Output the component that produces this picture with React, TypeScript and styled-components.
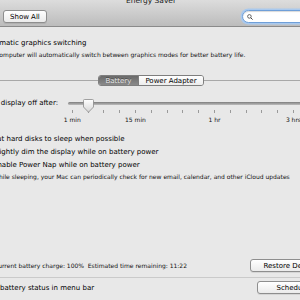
import React from 'react';
import styled, { createGlobalStyle } from 'styled-components';

const GlobalStyle = createGlobalStyle`
  html, body {
    margin: 0;
    padding: 0;
    overflow: hidden;
    background: #e8e8e8;
  }
  body {
    font-family: "DejaVu Sans", Verdana, sans-serif;
    color: #000;
  }
`;

const Window = styled.div`
  width: 388px;
  margin: -6px 0 0 -43px;
  display: flex;
  flex-direction: column;
`;

const TitleBar = styled.div`
  height: 33px;
  box-sizing: border-box;
  display: flex;
  flex-direction: column;
  background: linear-gradient(#e4e4e4, #bcbcbc);
  border-bottom: 1px solid #8a8a8a;
`;

const Title = styled.div`
  height: 14px;
  line-height: 14px;
  text-align: center;
  font-size: 7.5px;
  color: #222;
`;

const Toolbar = styled.div`
  display: flex;
  align-items: flex-start;
  gap: 7px;
  padding: 2px 10px 0 8px;
`;

const NavGroup = styled.div`
  display: flex;
  height: 13px;
  box-sizing: border-box;
  border: 1px solid #8e8e8e;
  border-radius: 3px;
  overflow: hidden;
  background: linear-gradient(#fdfdfd, #e6e6e6);
`;

const NavSeg = styled.div<{ $last?: boolean }>`
  width: 14px;
  display: flex;
  align-items: center;
  justify-content: center;
  font-size: 6px;
  color: #999;
  border-left: ${({ $last }) => ($last ? '1px solid #a0a0a0' : 'none')};
`;

const Spacer = styled.div`
  flex: 1;
`;

const PushButton = styled.div<{ $width?: number }>`
  height: 13px;
  box-sizing: border-box;
  width: ${({ $width }) => ($width ? `${$width}px` : 'auto')};
  padding: 0 6px;
  display: flex;
  align-items: center;
  justify-content: center;
  white-space: nowrap;
  font-size: 7px;
  color: #000;
  border: 1px solid #8e8e8e;
  border-radius: 3px;
  background: linear-gradient(#ffffff, #ebebeb);
  box-shadow: 0 1px 0 rgba(0, 0, 0, 0.08);
`;

const SearchField = styled.div`
  width: 93px;
  height: 13px;
  box-sizing: border-box;
  display: flex;
  align-items: center;
  padding-left: 4px;
  background: #fff;
  border: 1px solid #6f9fd8;
  border-radius: 7px;
  box-shadow: 0 0 0 1.5px #a9c9ee, inset 0 1px 1px rgba(0, 0, 0, 0.15);
`;

const Body = styled.div`
  display: flex;
  flex-direction: column;
`;

const OptionRow = styled.div<{ $indent: number; $height?: number }>`
  display: flex;
  align-items: flex-start;
  gap: 4px;
  padding-left: ${({ $indent }) => $indent}px;
  min-height: ${({ $height }) => ($height ? `${$height}px` : 'auto')};
`;

const Check = styled.div<{ $checked?: boolean; $top?: number }>`
  width: 8px;
  height: 8px;
  box-sizing: border-box;
  margin-top: ${({ $top }) => $top ?? 1}px;
  flex-shrink: 0;
  border: 1px solid #8a8a8a;
  border-radius: 2px;
  background: linear-gradient(#ffffff, #e4e4e4);
  position: relative;
  &::after {
    content: ${({ $checked }) => ($checked ? "'✓'" : "''")};
    position: absolute;
    left: 0;
    top: -3px;
    font-size: 8px;
    color: #222;
  }
`;

const OptionText = styled.div`
  display: flex;
  flex-direction: column;
`;

const Label = styled.div<{ $lh?: number }>`
  font-size: 7px;
  line-height: ${({ $lh }) => $lh ?? 10}px;
  white-space: nowrap;
  color: #000;
`;

const Note = styled.div<{ $indent?: number }>`
  font-size: 6px;
  line-height: 9px;
  white-space: nowrap;
  color: #111;
  padding-left: ${({ $indent }) => $indent ?? 0}px;
`;

const GraphicsSection = styled.div`
  padding-top: 11px;
`;

const TabView = styled.div`
  margin-top: 16px;
  height: 177px;
  display: flex;
  flex-direction: column;
`;

const TabBar = styled.div`
  display: flex;
  align-items: center;
  height: 11px;
`;

const TabLine = styled.div`
  flex: 1;
  height: 1px;
  background: #a8a8a8;
`;

const Segmented = styled.div`
  display: flex;
  height: 11px;
  box-sizing: border-box;
  border: 1px solid #7e7e7e;
  border-radius: 3px;
  overflow: hidden;
`;

const Segment = styled.div<{ $active?: boolean }>`
  padding: 0 6.5px;
  display: flex;
  align-items: center;
  font-size: 7px;
  white-space: nowrap;
  color: ${({ $active }) => ($active ? '#e6e6e6' : '#000')};
  background: ${({ $active }) =>
    $active ? 'linear-gradient(#6a6a6a, #8a8a8a)' : 'linear-gradient(#ffffff, #ececec)'};
  text-shadow: ${({ $active }) => ($active ? '0 -1px 0 rgba(0,0,0,0.4)' : 'none')};
  & + & {
    border-left: 1px solid #7e7e7e;
  }
`;

const SliderRow = styled.div`
  display: flex;
  align-items: flex-start;
  margin-top: 12px;
`;

const SliderLabel = styled.div`
  width: 101px;
  flex-shrink: 0;
  text-align: right;
  font-size: 7px;
  line-height: 10px;
  white-space: nowrap;
  margin-right: 6.4px;
`;

const Slider = styled.div`
  position: relative;
  width: 252.8px;
  margin-top: 1px;
`;

const TrackRow = styled.div`
  height: 8px;
  display: flex;
  align-items: center;
  padding: 0 3.6px;
`;

const Track = styled.div`
  flex: 1;
  height: 3px;
  border-radius: 2px;
  background: linear-gradient(#7d7d7d, #bdbdbd);
`;

const Scale = styled.div`
  display: flex;
  margin-top: 3px;
`;

const Stop = styled.div`
  width: 15.8px;
  display: flex;
  flex-direction: column;
  align-items: center;
`;

const Tick = styled.div`
  width: 1px;
  height: 3px;
  background: #9a9a9a;
`;

const StopLabel = styled.div`
  margin-top: 3px;
  font-size: 6px;
  line-height: 8px;
  white-space: nowrap;
  color: #111;
`;

const Knob = styled.svg`
  position: absolute;
  top: 0;
  width: 11px;
  height: 14px;
`;

const CheckList = styled.div`
  margin-top: 8.5px;
  display: flex;
  flex-direction: column;
`;

const StatusRow = styled.div`
  display: flex;
  align-items: center;
  justify-content: space-between;
  height: 13px;
  margin-top: 7px;
  padding: 0 10px 0 37px;
`;

const BottomBar = styled.div`
  margin-top: 5px;
  border-top: 1px solid #cacaca;
  display: flex;
  align-items: center;
  justify-content: space-between;
  padding: 3px 10px 8px 10px;
`;

const BottomOption = styled.div`
  display: flex;
  align-items: center;
  gap: 4px;
`;

const stops = [
  '1 min', '', '', '', '15 min', '', '', '', '', '1 hr', '', '', '', '', '3 hrs', 'Never',
];
const value = 1;

const SearchIcon = () => (
  <svg width="6" height="6" viewBox="0 0 6 6">
    <circle cx="2.4" cy="2.4" r="1.8" fill="none" stroke="#444" strokeWidth="0.8" />
    <line x1="3.7" y1="3.7" x2="5.6" y2="5.6" stroke="#444" strokeWidth="1" />
  </svg>
);

const App: React.FC = () => (
  <>
    <GlobalStyle />
    <Window>
      <TitleBar>
        <Title>Energy Saver</Title>
        <Toolbar>
          <NavGroup>
            <NavSeg>◀</NavSeg>
            <NavSeg $last>▶</NavSeg>
          </NavGroup>
          <PushButton>Show All</PushButton>
          <Spacer />
          <SearchField>
            <SearchIcon />
          </SearchField>
        </Toolbar>
      </TitleBar>

      <Body>
        <GraphicsSection>
          <OptionRow $indent={14}>
            <Check $checked />
            <OptionText>
              <Label>Automatic graphics switching</Label>
              <Note style={{ marginTop: 2 }}>
                The computer will automatically switch between graphics modes for better battery life.
              </Note>
            </OptionText>
          </OptionRow>
        </GraphicsSection>

        <TabView>
          <TabBar>
            <TabLine />
            <Segmented>
              <Segment $active>Battery</Segment>
              <Segment>Power Adapter</Segment>
            </Segmented>
            <TabLine />
          </TabBar>

          <SliderRow>
            <SliderLabel>Turn display off after:</SliderLabel>
            <Slider>
              <TrackRow>
                <Track />
              </TrackRow>
              <Scale>
                {stops.map((s, i) => (
                  <Stop key={i}>
                    <Tick />
                    {s && <StopLabel>{s}</StopLabel>}
                  </Stop>
                ))}
              </Scale>
              <Knob viewBox="0 0 11 14" style={{ left: 15.8 * value + 7.9 - 5.5 }}>
                <defs>
                  <linearGradient id="kg" x1="0" y1="0" x2="0" y2="1">
                    <stop offset="0" stopColor="#ffffff" />
                    <stop offset="1" stopColor="#d6d6d6" />
                  </linearGradient>
                </defs>
                <path d="M1.5 0.5 H9.5 Q10.5 0.5 10.5 1.5 V8 L5.5 13.2 L0.5 8 V1.5 Q0.5 0.5 1.5 0.5 Z" fill="url(#kg)" stroke="#8a8a8a" strokeWidth="0.8" />
              </Knob>
            </Slider>
          </SliderRow>

          <CheckList>
            <OptionRow $indent={24} $height={13}>
              <Check $checked $top={2.5} />
              <Label $lh={13}>Put hard disks to sleep when possible</Label>
            </OptionRow>
            <OptionRow $indent={24} $height={13}>
              <Check $checked $top={2.5} />
              <Label $lh={13}>Slightly dim the display while on battery power</Label>
            </OptionRow>
            <OptionRow $indent={24} $height={13}>
              <Check $top={2.5} />
              <Label $lh={13}>Enable Power Nap while on battery power</Label>
            </OptionRow>
            <Note $indent={36}>
              While sleeping, your Mac can periodically check for new email, calendar, and other iCloud updates
            </Note>
          </CheckList>
        </TabView>

        <StatusRow>
          <Note>Current battery charge: 100%&nbsp;&nbsp;Estimated time remaining: 11:22</Note>
          <PushButton $width={85}>Restore Defaults</PushButton>
        </StatusRow>

        <BottomBar>
          <BottomOption>
            <Check $checked $top={0} />
            <Label>Show battery status in menu bar</Label>
          </BottomOption>
          <PushButton $width={78}>Schedule...</PushButton>
        </BottomBar>
      </Body>
    </Window>
  </>
);

export default App;
